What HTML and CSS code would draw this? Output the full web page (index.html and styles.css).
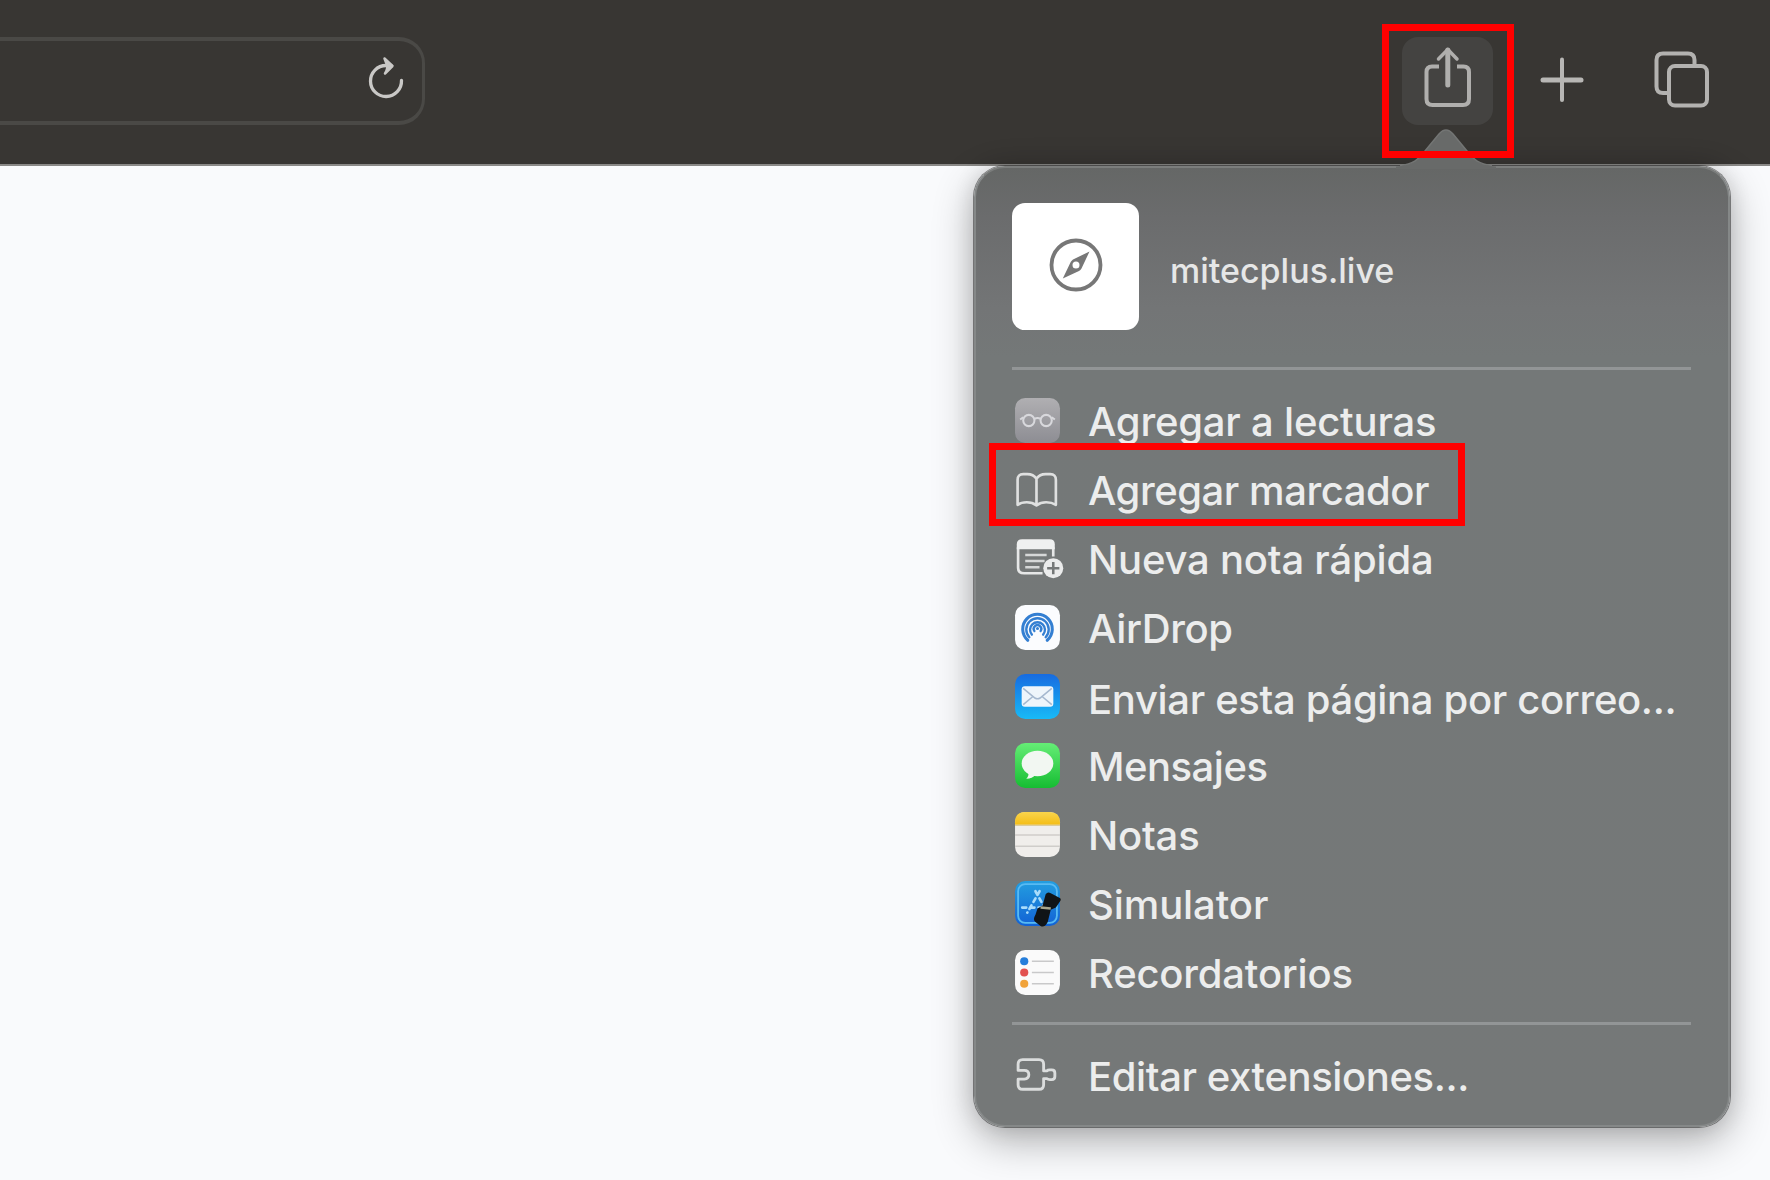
FILE: index.html
```html
<!DOCTYPE html>
<html lang="es">
<head>
<meta charset="utf-8">
<title>Compartir</title>
<link rel="stylesheet" href="styles.css">
</head>
<body>
<header class="toolbar">
  <div class="address">
    <svg class="reload" width="40" height="48" viewBox="0 0 40 48" fill="none">
      <path d="M34.500 24.500A15.500 15.500 0 1 1 19 9.500H24" stroke="#c9c8c6" stroke-width="3.300" stroke-linecap="round"/>
      <path d="M17.500 2.500L25.500 10L18 17.500Q21 13 20 9Z" fill="#c9c8c6" stroke="#c9c8c6" stroke-width="2.500" stroke-linecap="round" stroke-linejoin="round"/>
    </svg>
  </div>
  <div class="actions">
    <button class="action share" aria-label="Compartir">
      <svg width="91" height="88" viewBox="0 0 91 88" fill="none" stroke="#b0afad" stroke-width="4" stroke-linecap="round" stroke-linejoin="round">
        <path d="M37 29.500H30Q24.500 29.500 24.500 35V62Q24.500 68 30.500 68H61Q67 68 67 62V35Q67 29.500 61.500 29.500H55" stroke-linecap="butt"/>
        <path d="M45.800 48V13" stroke-width="5"/><path d="M36.500 22L45.800 12.500L55 22" stroke-width="3.500"/>
      </svg>
    </button>
    <button class="action plus" aria-label="Nueva pestaña">
      <svg width="44" height="46" viewBox="0 0 44 46" stroke="#b8b7b5" stroke-linecap="round"><path d="M22 2.500V43" stroke-width="4"/><path d="M3 23H41" stroke-width="5"/></svg>
    </button>
    <button class="action tabs" aria-label="Pestañas">
      <svg width="58" height="58" viewBox="0 0 58 58" fill="none" stroke="#b3b2b0" stroke-width="4">
        <rect x="17" y="16" width="38" height="39.500" rx="6"/>
        <path d="M17 43H11Q4.500 43 4.500 36.500V10Q4.500 3.500 11 3.500H36Q42.500 3.500 42.500 10V16"/>
      </svg>
    </button>
  </div>
</header>
<main class="page"></main>

<section class="popover">
  <svg class="arrow" width="100" height="42" viewBox="0 0 100 42">
    <path d="M0 39.500C17 38 22 33 29 24L43 7Q50 -1 57 7L71 24C78 33 83 38 100 39.500V42H0Z" fill="#686a69"/>
    <path d="M4 38.500C17 37 22 33 29 24L43 7Q50 -1 57 7L71 24C78 33 83 37 96 38.500" fill="none" stroke="#737574" stroke-width="1.500"/>
  </svg>
  <div class="site">
    <div class="thumb">
      <svg width="56" height="56" viewBox="0 0 56 56"><circle cx="28" cy="28" r="24.500" fill="none" stroke="#777" stroke-width="3.800"/><path fill="#777" fill-rule="evenodd" d="M41.500 14.500L33.500 31.500Q32.500 33 31 34L14.800 41.500L22.700 25Q23.500 23.500 25 22.500ZM28 24.500A3.500 3.500 0 1 0 28 31.500A3.500 3.500 0 1 0 28 24.500Z"/></svg>
    </div>
    <span class="host">mitecplus.live</span>
  </div>
  <ul class="list">
    <li class="row">
      <svg class="icon" viewBox="0 0 48 48"><defs><linearGradient id="gray" x2="0" y2="1"><stop stop-color="#b0afb2"/><stop offset="1" stop-color="#8d8d93"/></linearGradient></defs><rect x="2" y="2" width="44" height="44" rx="10" fill="url(#gray)"/><g fill="none" stroke="#d8d8dc" stroke-width="2"><circle cx="15.500" cy="24" r="5.500"/><circle cx="32.500" cy="24" r="5.500"/><path d="M21 22.500Q24 20.500 27 22.500M7 23L10 21M41 23L38 21"/></g></svg>
      <span class="label l1">Agregar a lecturas</span></li>
    <li class="row">
      <svg class="icon" viewBox="0 0 48 48" fill="none" stroke="#dfe0e0" stroke-width="2.600" stroke-linejoin="round"><path d="M23 39.500V13.500Q20 9 14 9H10Q4.500 9 4.500 14.500V39Q8 36.500 13.500 36.500Q19 36.500 23 39.500Q27 36.500 32.500 36.500Q38 36.500 42 39V14.500Q42 9 36.500 9H32Q26 9 23 13.500"/></svg>
      <span class="label l2">Agregar marcador</span></li>
    <li class="row">
      <svg class="icon wide" viewBox="0 0 52 48"><path d="M5 13V33Q5 38.500 11 38.500H29M39.500 13V22" fill="none" stroke="#e6e7e7" stroke-width="2.600"/><path d="M3.700 15V10Q3.700 5 9 5H36Q41 5 41 10V15Z" fill="#eff0f0"/><path d="M12 20.500H33M12 26.500H31M12 32.500H26" stroke="#d6d8d8" stroke-width="2.500"/><circle cx="39.500" cy="33.500" r="9.800" fill="#ebecec"/><path d="M39.500 27.500V39.500M33.500 33.500H45.500" stroke="#757878" stroke-width="2.500"/></svg>
      <span class="label l3">Nueva nota rápida</span></li>
    <li class="row">
      <svg class="icon" viewBox="0 0 48 48"><rect x="2" y="2" width="44" height="44" rx="10" fill="#fbfcfe"/><g fill="none" stroke="#347fd2" stroke-width="2.300" stroke-linecap="round"><path d="M14.500 36.500A14.500 14.500 0 1 1 33.500 36.500" stroke-width="3"/><path d="M16 33.500A11 11 0 1 1 32 33.500"/><path d="M18.500 31A7.300 7.300 0 1 1 29.500 31"/><path d="M21 27.500A3.700 3.700 0 1 1 27 27.500"/></g><path d="M24 25L31.500 38H16.500Z" fill="#fbfcfe"/><circle cx="24" cy="25" r="1.500" fill="#347fd2"/></svg>
      <span class="label l4">AirDrop</span></li>
    <li class="row">
      <svg class="icon" viewBox="0 0 48 48"><defs><linearGradient id="blue" x2="0" y2="1"><stop stop-color="#176be0"/><stop offset="1" stop-color="#18baf7"/></linearGradient></defs><rect x="2" y="2" width="44" height="44" rx="10" fill="url(#blue)"/><rect x="8.500" y="14" width="31" height="20" rx="3" fill="#eef5fb"/><path d="M10 16L21.500 25.500Q24 27 26.500 25.500L38 16M10 32L19.500 24M38 32L28.500 24" fill="none" stroke="#a5b8cf" stroke-width="1.500"/></svg>
      <span class="label l5">Enviar esta página por correo...</span></li>
    <li class="row">
      <svg class="icon" viewBox="0 0 48 48"><defs><linearGradient id="green" x2="0" y2="1"><stop stop-color="#65ed76"/><stop offset="1" stop-color="#16bd32"/></linearGradient></defs><rect x="2" y="2" width="44" height="44" rx="10" fill="url(#green)"/><ellipse cx="24" cy="22" rx="15.500" ry="12.500" fill="#f2f7f2"/><path d="M15 30Q16 34 13 37Q19 37 22 33Z" fill="#f2f7f2"/></svg>
      <span class="label l6">Mensajes</span></li>
    <li class="row">
      <svg class="icon" viewBox="0 0 48 48"><defs><linearGradient id="gold" x2="0" y2="1"><stop stop-color="#f9d44c"/><stop offset="1" stop-color="#f4bd16"/></linearGradient></defs><rect x="2" y="2" width="44" height="44" rx="10" fill="#f0eeeb"/><path d="M2 14.500V12Q2 2 12 2H36Q46 2 46 12V14.500Z" fill="url(#gold)"/><path d="M2 24.500H46M2 35.500H46" stroke="#cfcdca" stroke-width="1.500"/><path d="M2 15H46" stroke="#d6c180"/></svg>
      <span class="label l7">Notas</span></li>
    <li class="row">
      <svg class="icon" viewBox="0 0 48 48"><defs><linearGradient id="sim" x2="0" y2="1"><stop stop-color="#239ee0"/><stop offset="1" stop-color="#1262d5"/></linearGradient></defs><rect x="2" y="2" width="44" height="44" rx="10" fill="url(#sim)"/><rect x="5" y="5" width="38" height="38" rx="7" fill="none" stroke="#58baf2" stroke-width="1.800"/><path d="M26 12L14 33M22 12L32 30M9 28H30" stroke="#a9dcfb" stroke-width="2.600" stroke-linecap="round" stroke-dasharray="4 4"/><path d="M32 15Q34 12 37 14L45 18Q48 19 46 22L42 28L37 30L34 42Q31 48 27 46L22 42Q19 40 22 35L24 29L29 26Z" fill="#101417"/><path d="M27 28L37 29" stroke="#a8a68d" stroke-width="2.500"/></svg>
      <span class="label l8">Simulator</span></li>
    <li class="row">
      <svg class="icon" viewBox="0 0 48 48"><rect x="2" y="2" width="44" height="44" rx="10" fill="#fafafa"/><circle cx="11" cy="13" r="4" fill="#257edb"/><circle cx="11" cy="24" r="4" fill="#e25150"/><circle cx="11" cy="35" r="4" fill="#f1a33a"/><path d="M18.500 13H40M18.500 24H40M18.500 35H40" stroke="#c9c9ca" stroke-width="1.600"/></svg>
      <span class="label l9">Recordatorios</span></li>
  </ul>
  <div class="row footer">
    <svg class="icon" viewBox="0 0 48 48" fill="none" stroke="#dbdddd" stroke-width="2.800" stroke-linejoin="round"><path d="M5 19V13Q5 8.500 9.500 8.500H25.500Q30 8.500 30 13V19.500H33Q34 18.500 36 18.500H38Q41 18.500 41 21.500V25Q41 28 38 28H36Q34 28 33 27H30V33Q30 37.500 25.500 37.500H9.500Q5 37.500 5 33V27.500H11Q15.500 27 15.500 23.200Q15.500 19 11 19Z"/></svg>
    <span class="label l10">Editar extensiones...</span>
  </div>
</section>
<div class="highlight highlight-share"></div>
<div class="highlight highlight-bookmark"></div>
</body>
</html>
```
FILE: styles.css
```css
* { box-sizing: border-box; }
body {
  margin: 0;
  width: 1770px;
  height: 1180px;
  overflow: hidden;
  position: relative;
  display: flex;
  flex-direction: column;
  background: #f9fafc;
  font-family: Inter, "Liberation Sans", sans-serif;
}
.toolbar {
  height: 166px;
  flex: none;
  display: flex;
  justify-content: space-between;
  align-items: flex-start;
  padding: 37px 60px 0 0;
  background: #383633;
  border-bottom: 2px solid #8a8987;
}
.address {
  width: 425px;
  height: 88px;
  display: flex;
  align-items: center;
  justify-content: flex-end;
  padding-right: 15px;
  border: solid #4a4946;
  border-width: 4px 3px 4px 0;
  border-radius: 0 26px 26px 0;
}
.reload { margin-top: -3px; }
.actions { display: flex; align-items: center; height: 88px; }
.action {
  display: flex;
  padding: 0;
  border: 0;
  background: none;
}
.share { background: #444341; border-radius: 16px; }
.plus { margin: -3px 68px 0 47px; }
.tabs { margin-top: -4px; }
.page { flex: 1; background: #f9fafc; }

.popover {
  position: absolute;
  left: 974px;
  top: 166px;
  width: 756px;
  height: 961px;
  padding: 35px 37px 0 36px;
  border: 2px solid #858888;
  border-top-color: #7b7d7c;
  border-radius: 31px;
  background: linear-gradient(#656766 0, #6b6c6d 50px, #737576 140px, #747878 190px, #757878 100%);
  box-shadow: 0 0 0 1px rgba(30, 30, 30, .5), 0 14px 40px rgba(0, 0, 0, .3), 0 0 22px rgba(0, 0, 0, .12);
}
.arrow { position: absolute; left: 420px; top: -41px; }
.site {
  height: 167px;
  display: flex;
  align-items: flex-start;
  gap: 31px;
  border-bottom: 3px solid #929596;
}
.thumb {
  width: 127px;
  height: 127px;
  display: flex;
  align-items: center;
  justify-content: center;
  padding-bottom: 3px;
  border-radius: 13px;
  background: #fff;
}
.host {
  margin-top: 47px;
  font-size: 34px;
  line-height: 42px;
  font-weight: 500;
  color: #e6e7e7;
}
.list {
  margin: 0;
  padding: 16px 0 15px;
  list-style: none;
  border-bottom: 3px solid #929596;
}
.row {
  height: 69px;
  display: flex;
  align-items: center;
  gap: 26px;
  padding-left: 1px;
}
.footer { margin-top: 16px; }
.icon { width: 49px; height: 49px; flex: none; }
.icon.wide { width: 53px; margin-right: -4px; }
.label {
  font-size: 40px;
  line-height: 48px;
  font-weight: 500;
  color: #eceded;
  white-space: nowrap;
  padding-top: 3px;
  letter-spacing: -.2px;
}
.l2 { letter-spacing: -.45px; }
.l4 { letter-spacing: -.35px; }
.l5 { letter-spacing: -.33px; padding-top: 6px; }
.l6 { letter-spacing: -.5px; }
.l8 { letter-spacing: -.1px; }
.l10 { letter-spacing: -.4px; }
.highlight { position: absolute; border: 7px solid #f00; }
.highlight-share { left: 1382px; top: 24px; width: 132px; height: 134px; }
.highlight-bookmark { left: 989px; top: 443px; width: 476px; height: 83px; }
```
